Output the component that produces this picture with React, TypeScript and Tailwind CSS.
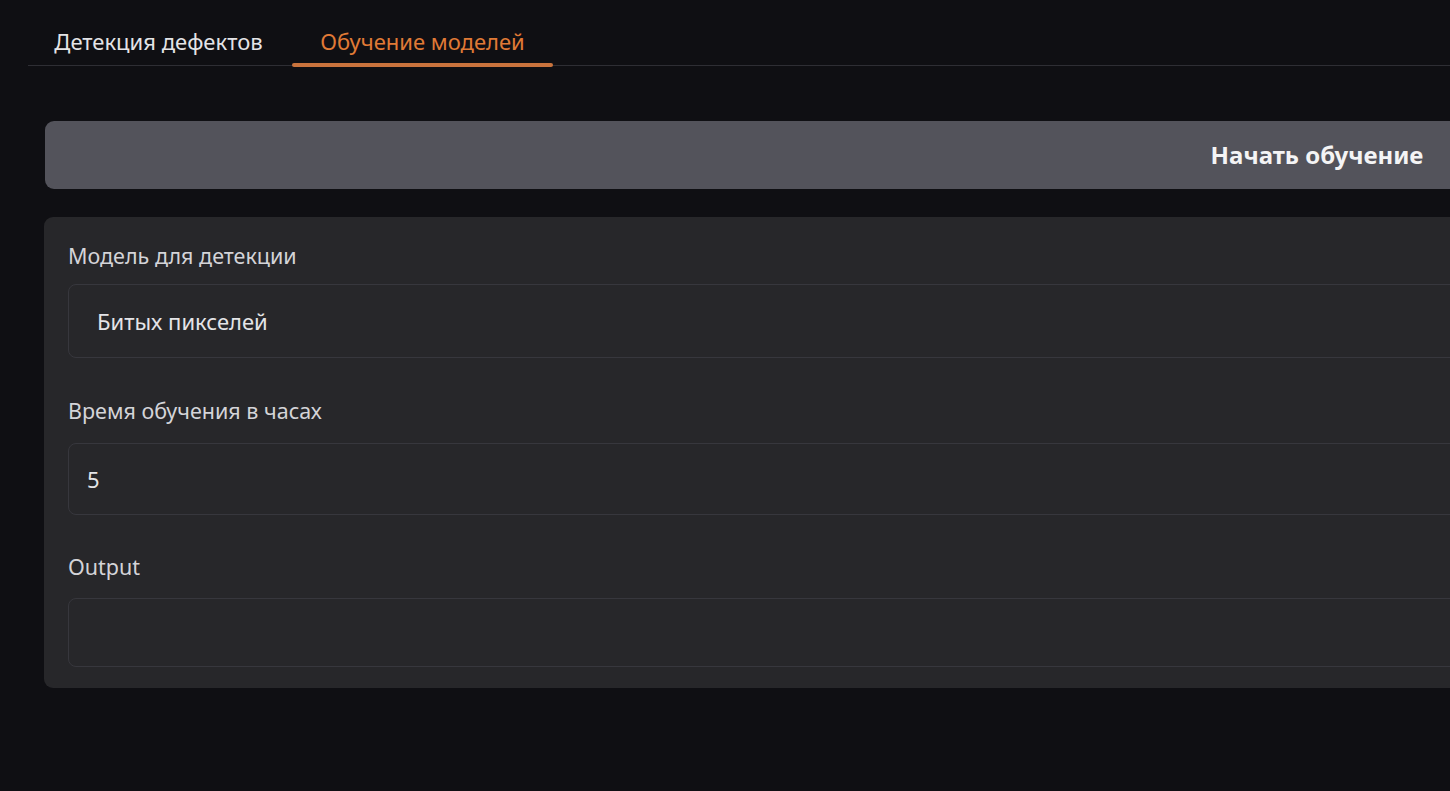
import React from "react";

export default function App() {
  const font = { fontFamily: '"Noto Sans", "Open Sans", sans-serif' };
  return (
    <div className="w-[1450px] h-[791px] overflow-hidden bg-[#0f0f13]" style={font}>
      <div className="w-[2600px] pl-[28px] pt-[17px]">
        {/* Tabs */}
        <div className="relative flex gap-[3px] border-b border-[#2e2e34]">
          <div className="w-[261px] h-[48px] flex items-center justify-center text-[22px] text-[#e4e4e7]">
            Детекция дефектов
          </div>
          <div className="relative w-[261px] h-[48px] flex items-center justify-center text-[22px] text-[#e07a36]">
            Обучение моделей
            <div className="absolute left-0 right-0 bottom-[-2px] h-[4px] rounded-full bg-[#c9733d]" />
          </div>
        </div>

        <div className="pl-[17px] pt-[55px] w-[2561px]">
          {/* Button */}
          <div className="h-[68px] rounded-[9px] bg-[#53535b] flex items-center justify-center text-[24px] font-bold text-[#f4f4f5]">
            Начать обучение
          </div>

          {/* Panel */}
          <div className="mt-[28px] -ml-px rounded-[9px] bg-[#27272a] px-[24px] pt-[25px] pb-[21px] flex flex-col">
            <div className="h-[28px] flex items-center text-[21.5px] text-[#d4d4d8]">Модель для детекции</div>
            <div className="mt-[14px] h-[74px] rounded-[8px] border border-[#37373d] flex items-center pl-[28px] text-[22px] text-[#e4e4e7]">
              Битых пикселей
            </div>

            <div className="mt-[39px] h-[28px] flex items-center text-[21.5px] text-[#d4d4d8]">Время обучения в часах</div>
            <div className="mt-[18px] h-[72px] rounded-[8px] border border-[#37373d] flex items-center pl-[18px] text-[22px] text-[#e4e4e7]">
              5
            </div>

            <div className="mt-[38px] h-[28px] flex items-center text-[21.5px] text-[#d4d4d8]">Output</div>
            <div className="mt-[17px] h-[69px] rounded-[8px] border border-[#37373d]" />
          </div>
        </div>
      </div>
    </div>
  );
}
